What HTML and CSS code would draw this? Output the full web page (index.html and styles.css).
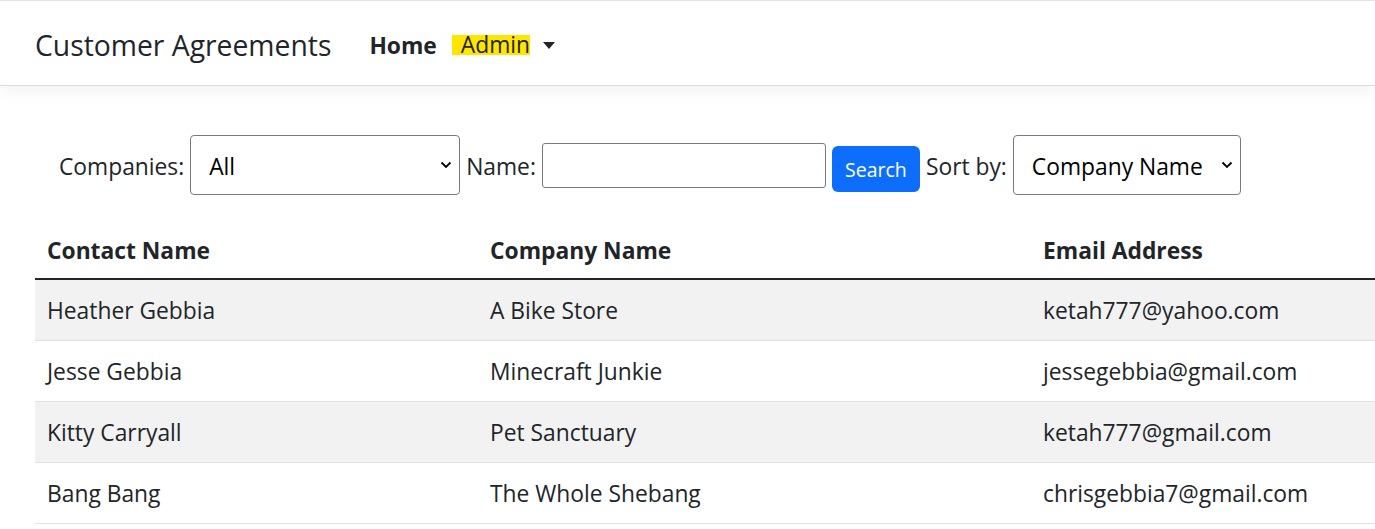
FILE: index.html
```html
<!DOCTYPE html>
<html lang="en">
<head>
<meta charset="utf-8">
<title>Customer Agreements</title>
<link rel="stylesheet" href="styles.css">
</head>
<body>
<header class="navbar">
  <span class="brand">Customer Agreements</span>
  <nav class="nav-links">
    <a class="nav-link home" href="#">Home</a>
    <a class="nav-link admin" href="#"><span class="mark">Admin</span><span class="caret"></span></a>
  </nav>
</header>
<main class="main">
  <form class="filters">
    <label class="lbl">Companies:</label>
    <select class="sel sel-companies"><option>All</option></select>
    <label class="lbl">Name:</label>
    <input class="txt" type="text">
    <button class="btn" type="button">Search</button>
    <label class="lbl">Sort by:</label>
    <select class="sel sel-sort"><option>Company Name</option></select>
  </form>
  <table class="tbl">
    <colgroup><col class="c1"><col class="c2"><col class="c3"></colgroup>
    <thead>
      <tr><th>Contact Name</th><th>Company Name</th><th>Email Address</th></tr>
    </thead>
    <tbody>
      <tr class="odd"><td>Heather Gebbia</td><td>A Bike Store</td><td>ketah777@yahoo.com</td></tr>
      <tr><td>Jesse Gebbia</td><td>Minecraft Junkie</td><td>jessegebbia@gmail.com</td></tr>
      <tr class="odd"><td>Kitty Carryall</td><td>Pet Sanctuary</td><td>ketah777@gmail.com</td></tr>
      <tr><td>Bang Bang</td><td>The Whole Shebang</td><td>chrisgebbia7@gmail.com</td></tr>
    </tbody>
  </table>
</main>
</body>
</html>
```
FILE: styles.css
```css
html, body {
  margin: 0;
  overflow: hidden;
  background: #fff;
}
body {
  font-family: "Open Sans", "Noto Sans", sans-serif;
  color: #212529;
  font-size: 22.5px;
  border-top: 1px solid #e3e3e3;
}
.navbar {
  height: 85px;
  border-bottom: 1px solid #dcdcdc;
  box-shadow: 0 6px 18px rgba(0, 0, 0, 0.05);
  display: flex;
  align-items: center;
  padding: 4px 0 0 35px;
  box-sizing: border-box;
}
.brand {
  font-size: 28.3px;
  color: #212529;
  margin-right: 38px;
}
.nav-links {
  display: flex;
  align-items: center;
}
.nav-link {
  color: #212529;
  text-decoration: none;
  font-size: 22.8px;
  display: flex;
  align-items: center;
}
.home {
  font-weight: 700;
  margin-right: 15px;
}
.mark {
  background: #ffe600;
  padding-left: 9px;
  line-height: 20px;
}
.caret {
  width: 0;
  height: 0;
  border-left: 6.5px solid transparent;
  border-right: 6.5px solid transparent;
  border-top: 7px solid #212529;
  margin-left: 13px;
}
.main {
  padding: 49px 0 0 35px;
}
.filters {
  display: flex;
  align-items: center;
  gap: 6px;
  padding-left: 24px;
  height: 60px;
  margin: 0 0 25px;
}
.lbl {
  font-size: 22.8px;
  padding-top: 2px;
}
.sel {
  appearance: none;
  -webkit-appearance: none;
  height: 60px;
  border: 1px solid #7a7a7a;
  border-radius: 4px;
  background: #fff url("data:image/svg+xml,%3Csvg xmlns='http://www.w3.org/2000/svg' width='12' height='8' viewBox='0 0 12 8'%3E%3Cpath d='M1.5 1.5 6 6l4.5-4.5' fill='none' stroke='%23000' stroke-width='1.8'/%3E%3C/svg%3E") no-repeat right 7px center;
  background-size: 12px 8px;
  font-family: inherit;
  font-size: 22.8px;
  color: #000;
  padding: 2px 0 0 18px;
  box-sizing: border-box;
}
.sel-companies { width: 270px; }
.sel-sort { width: 228px; }
.txt {
  width: 284px;
  height: 45px;
  border: 1px solid #7a7a7a;
  border-radius: 3px;
  box-sizing: border-box;
  margin: 0;
}
.btn {
  width: 88px;
  height: 46px;
  margin-top: 8px;
  background: #0d6efd;
  color: #fff;
  border: 0;
  border-radius: 6px;
  font-family: inherit;
  font-size: 19.5px;
  padding: 0;
}
.tbl {
  width: 1340px;
  border-collapse: collapse;
  table-layout: fixed;
}
.c1 { width: 443px; }
.c2 { width: 553px; }
.tbl th, .tbl td {
  text-align: left;
  padding: 13px 12px 11px;
  line-height: 36px;
  font-size: 22.8px;
  border-bottom: 1px solid #dee2e6;
  white-space: nowrap;
}
.tbl th {
  font-weight: 700;
  border-bottom: 2px solid #212529;
  padding-top: 13px;
  padding-bottom: 9px;
}
.tbl tr.odd td {
  background: #f2f2f2;
}
```
